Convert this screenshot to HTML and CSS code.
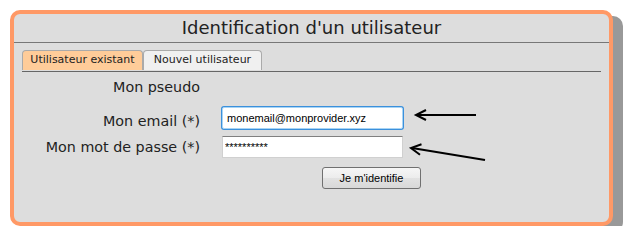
FILE: index.html
```html
<!DOCTYPE html>
<html lang="fr">
<head>
    <meta charset="UTF-8">
    <title>Identification d'un utilisateur</title>
    <link rel="stylesheet" href="styles.css">
</head>
<body>
    <div class="panel">
        <h1 class="title">Identification d'un utilisateur</h1>
        <div class="tabs">
            <span class="tab tab-active">Utilisateur existant</span>
            <span class="tab tab-other">Nouvel utilisateur</span>
        </div>
        <form class="login">
            <div class="row row-pseudo">
                <label class="label">Mon pseudo</label>
            </div>
            <div class="row row-email">
                <label class="label" for="email">Mon email (*)</label>
                <input class="field field-focus" id="email" type="text" value="monemail@monprovider.xyz">
            </div>
            <div class="row row-pass">
                <label class="label" for="pass">Mon mot de passe (*)</label>
                <input class="field" id="pass" type="text" value="**********">
            </div>
            <div class="row row-btn">
                <button class="btn" type="button">Je m'identifie</button>
            </div>
        </form>
    </div>
    <svg class="arrows" width="637" height="243" viewBox="0 0 637 243">
        <line x1="476" y1="115" x2="417" y2="115" />
        <polyline points="426,110 416,115 426,120" />
        <line x1="485" y1="160" x2="412" y2="148" />
        <polyline points="421.5,144.3 411,148 420,154.8" />
    </svg>
</body>
</html>
```

FILE: styles.css
```css
body {
    margin: 0;
    position: relative;
    background-color: #fff;
    font-family: "DejaVu Sans", Verdana, sans-serif;
    color: #222;
}
.panel {
    box-sizing: border-box;
    width: 603px;
    height: 216px;
    margin: 10px 0 0 10px;
    border: 4px solid #ff9966;
    border-radius: 10px;
    background-color: #dddddd;
    box-shadow: 10px 6px 0 #999;
}
.title {
    margin: 0;
    height: 28px;
    line-height: 28px;
    font-size: 18px;
    font-weight: normal;
    text-align: center;
    border-bottom: 1px solid #777;
}
.tabs {
    display: flex;
    margin: 7px 8px 0;
    padding-bottom: 1px;
    border-bottom: 1px solid #666;
}
.tab {
    box-sizing: border-box;
    height: 20px;
    line-height: 18px;
    font-size: 11px;
    text-align: center;
    border: 1px solid #aaa;
    border-bottom: none;
    border-radius: 4px 4px 0 0;
}
.tab-active {
    width: 121px;
    background-color: #ffcc99;
}
.tab-other {
    width: 119px;
    background-color: #f0f0f0;
}
.login {
    display: flex;
    flex-direction: column;
}
.row {
    display: flex;
    align-items: flex-start;
}
.label {
    width: 186px;
    margin-right: 22px;
    font-size: 14.3px;
    text-align: right;
}
.row-pseudo {
    margin-top: 7px;
}
.row-pseudo .label {
    line-height: 17px;
}
.row-email {
    margin-top: 11px;
}
.row-email .label {
    line-height: 28px;
}
.row-pass {
    margin-top: 1px;
}
.row-pass .label {
    line-height: 22px;
}
.row-btn {
    margin-top: 9px;
    padding-left: 308px;
}
.field {
    box-sizing: border-box;
    width: 181px;
    height: 22px;
    margin: 0;
    padding: 0 4px;
    font-family: "Liberation Sans", Arial, sans-serif;
    font-size: 11px;
    color: #000;
    background-color: #fff;
    border: 1px solid #d0d0d0;
    border-top-color: #808080;
    outline: none;
}
#pass {
    padding-left: 2px;
}
.field-focus {
    border: 1px solid #a8d4f4;
    border-radius: 2px;
    box-shadow: 0 0 0 1px #3b90dc;
}
.btn {
    box-sizing: border-box;
    width: 99px;
    height: 22px;
    padding: 0;
    font-family: "Liberation Sans", Arial, sans-serif;
    font-size: 11px;
    color: #000;
    border: 1px solid #707070;
    border-radius: 3px;
    background: linear-gradient(#f6f6f6, #ececec 50%, #e2e2e2 51%, #d8d8d8);
}
.arrows {
    position: absolute;
    top: 0;
    left: 0;
    pointer-events: none;
}
.arrows line,
.arrows polyline {
    fill: none;
    stroke: #000;
    stroke-width: 2;
}
```
